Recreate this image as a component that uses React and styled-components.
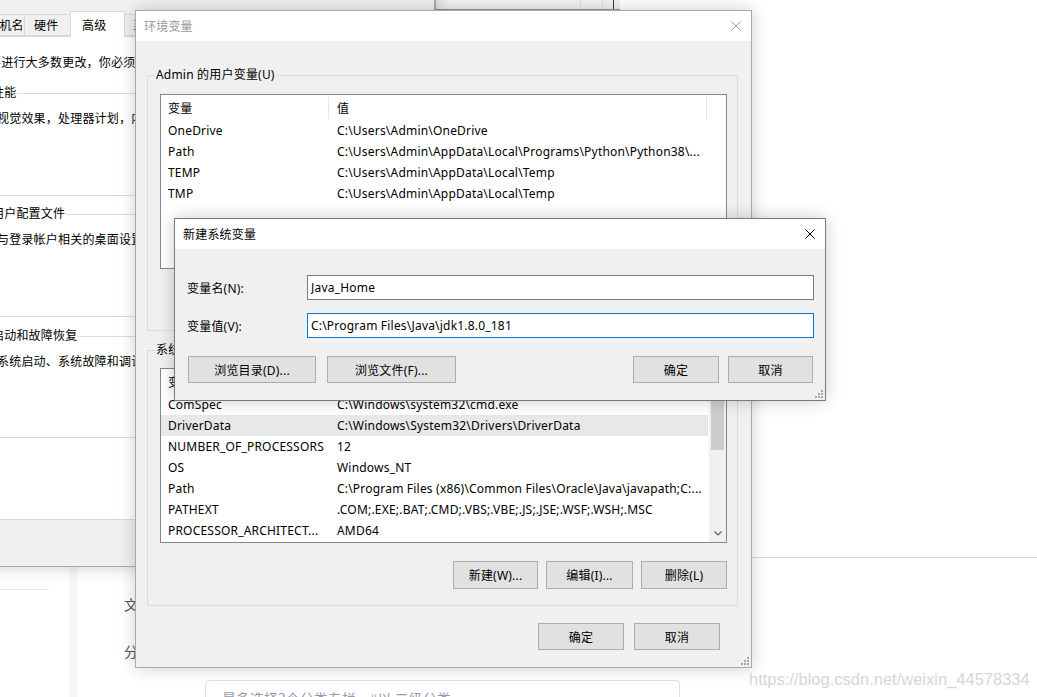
import React from "react"
import styled, { createGlobalStyle } from "styled-components"

const GlobalStyle = createGlobalStyle`
  html, body {
    margin: 0;
    padding: 0;
    background: #fff;
  }
  body {
    font-family: "Noto Sans", "Noto Sans CJK SC", sans-serif;
    font-size: 12px;
    letter-spacing: 0.2px;
    color: #000;
  }
`

const Desktop = styled.div`
  position: relative;
  width: 1037px;
  height: 697px;
  overflow: hidden;
  background: #fff;
`

/* ---------- blog editor page behind the dialogs ---------- */

const BlogPage = styled.div`
  position: absolute;
  inset: 0;
  display: grid;
  grid-template-columns: 69px 8px 1fr;
  grid-template-rows: 567px 1fr;
  font-family: "Noto Sans CJK SC", sans-serif;
  letter-spacing: 0;
`

const HeaderRule = styled.div`
  grid-column: 3;
  grid-row: 1;
  align-self: end;
  justify-self: end;
  width: 285px;
  margin-bottom: 9px;
  border-top: 1px solid #dcdcdc;
`

const NavColumn = styled.div`
  grid-column: 1;
  grid-row: 2;
  padding-top: 22px;
`

const NavRule = styled.div`
  width: 49px;
  border-top: 1px solid #e8e8e8;
`

const Gutter = styled.div`
  grid-column: 2;
  grid-row: 2;
  background: #f5f6f7;
`

const EditorColumn = styled.div`
  grid-column: 3;
  grid-row: 2;
  display: flex;
  flex-direction: column;
  padding: 27px 0 0 47px;
`

const FieldCaption = styled.div`
  height: 47px;
  font-size: 14px;
  line-height: 20px;
  color: #555;
`

const CategoryBox = styled.div`
  margin: -8px 0 0 81px;
  width: 475px;
  height: 40px;
  box-sizing: border-box;
  border: 1px solid #e0e0e6;
  border-radius: 4px;
  padding: 7px 0 0 16px;
  font-size: 14px;
  color: #999aaa;
`

const BackWindowStrip = styled.div`
  position: absolute;
  left: 435px;
  top: -20px;
  width: 185px;
  height: 30px;
  display: flex;
  box-sizing: border-box;
  border-bottom: 1px solid #9a9a9a;
  border-left: 1px solid #bdbdbd;
  background: linear-gradient(#f7f7f7, #f1f1f1);
`

const StripCell = styled.div`
  width: ${(p) => p.$w}px;
  border-right: 1px solid ${(p) => (p.$dark ? "#333" : "#dedede")};
`

/* ---------- generic window chrome ---------- */

const Window = styled.div`
  position: absolute;
  isolation: isolate;
  left: ${(p) => p.$x}px;
  top: ${(p) => p.$y}px;
  width: ${(p) => p.$w}px;
  height: ${(p) => p.$h}px;
  box-sizing: border-box;
  display: flex;
  flex-direction: column;
  padding: ${(p) => p.$pad || 0};
  background: #f0f0f0;
  border: 1px solid ${(p) => (p.$active ? "#7a7a7a" : "#a9a9a9")};
  box-shadow: 0 0 16px rgba(0, 0, 0, 0.2);
`

const TitleBar = styled.div`
  flex: none;
  height: 30px;
  display: flex;
  align-items: center;
  justify-content: space-between;
  padding: 0 10px 0 8px;
  background: #fff;
`

const TitleText = styled.span`
  color: ${(p) => (p.$active ? "#000" : "#9a9a9a")};
`

const CloseIcon = ({ color }) => (
  <svg width="10" height="10" viewBox="0 0 10 10">
    <path d="M0.5 0.5 L9.5 9.5 M9.5 0.5 L0.5 9.5" stroke={color} strokeWidth="1" fill="none" />
  </svg>
)

const GripBox = styled.div`
  position: absolute;
  right: 2px;
  bottom: 2px;
  width: 8px;
  height: 8px;
  display: flex;
`

const ResizeGrip = () => (
  <GripBox>
    <svg width="8" height="8" viewBox="0 0 8 8">
      {[[6, 0], [3, 3], [6, 3], [0, 6], [3, 6], [6, 6]].map(([x, y]) => (
        <rect key={`${x}-${y}`} x={x} y={y} width="2" height="2" fill="#a8a8a8" />
      ))}
    </svg>
  </GripBox>
)

const Button = styled.button`
  flex: none;
  width: ${(p) => p.$w}px;
  height: ${(p) => p.$h || 27}px;
  box-sizing: border-box;
  padding: 0;
  border: 1px solid #adadad;
  background: #e1e1e1;
  font-family: inherit;
  font-size: 12px;
  letter-spacing: inherit;
  color: #000;
`

const GroupBox = styled.div`
  position: relative;
  flex: none;
  display: flex;
  flex-direction: column;
  box-sizing: border-box;
  height: ${(p) => p.$h}px;
  margin: ${(p) => p.$m};
  padding: ${(p) => p.$pad};
  border: 1px solid #dcdcdc;
`

const GroupLabel = styled.span`
  position: absolute;
  top: -9px;
  left: 7px;
  padding: 0 1px;
  line-height: 16px;
  white-space: nowrap;
  background: ${(p) => p.$bg || "#f0f0f0"};
`

/* ---------- system properties window (left, behind) ---------- */

const TabStrip = styled.div`
  flex: none;
  display: flex;
  align-items: flex-end;
  height: 22px;
  position: relative;
  z-index: 1;
`

const Tab = styled.div`
  flex: none;
  width: ${(p) => p.$w}px;
  height: ${(p) => (p.$selected ? 26 : 22)}px;
  box-sizing: border-box;
  padding-left: ${(p) => (p.$selected ? 11 : 9)}px;
  margin: ${(p) => (p.$selected ? "0 -2px -1px" : "0 -1px 0 0")};
  display: flex;
  align-items: center;
  white-space: nowrap;
  border: 1px solid #d9d9d9;
  border-bottom: ${(p) => (p.$selected ? "none" : "1px solid #d9d9d9")};
  background: ${(p) => (p.$selected ? "#fff" : "#f0f0f0")};
  position: relative;
  z-index: ${(p) => (p.$selected ? 2 : 0)};
`

const TabPage = styled.div`
  flex: none;
  height: 484px;
  box-sizing: border-box;
  display: flex;
  flex-direction: column;
  padding: 18px 0 0 23px;
  background: #fff;
  border: 1px solid #d9d9d9;
`

const PageText = styled.div`
  line-height: 16px;
  white-space: nowrap;
`

const GroupText = styled.div`
  line-height: 16px;
  white-space: nowrap;
  padding: 17px 0 0 13px;
`

/* ---------- list view ---------- */

const ListView = styled.div`
  flex: none;
  height: 175px;
  box-sizing: border-box;
  display: flex;
  border: 1px solid #828790;
  background: #fff;
  overflow: hidden;
`

const ListBody = styled.div`
  flex: 1;
  display: flex;
  flex-direction: column;
  min-width: 0;
`

const ListHeader = styled.div`
  flex: none;
  display: flex;
  height: 25px;
`

const HeaderCell = styled.div`
  position: relative;
  flex: none;
  width: ${(p) => p.$w}px;
  box-sizing: border-box;
  padding-left: ${(p) => p.$pl}px;
  display: flex;
  align-items: center;
  &::after {
    content: "";
    position: absolute;
    right: 0;
    top: 2px;
    bottom: 1px;
    width: 1px;
    background: #e5e5e5;
  }
`

const Row = styled.div`
  flex: none;
  display: flex;
  width: 547px;
  height: 21px;
  background: ${(p) => (p.$selected ? "#e8e8e8" : "transparent")};
`

const Cell = styled.div`
  flex: none;
  width: ${(p) => p.$w}px;
  box-sizing: border-box;
  padding-left: ${(p) => p.$pl}px;
  display: flex;
  align-items: center;
  white-space: nowrap;
  overflow: hidden;
`

const ScrollBar = styled.div`
  flex: none;
  width: 17px;
  display: flex;
  flex-direction: column;
  background: #f0f0f0;
`

const ScrollArrow = styled.div`
  flex: none;
  height: 17px;
  display: flex;
  align-items: center;
  justify-content: center;
`

const ScrollTrack = styled.div`
  flex: 1;
  padding: 0 2px;
`

const ScrollThumb = styled.div`
  height: 64px;
  background: #cdcdcd;
`

const Chevron = ({ up }) => (
  <svg width="8" height="5" viewBox="0 0 8 5">
    <path
      d={up ? "M0.5 4.5 L4 1 L7.5 4.5" : "M0.5 0.5 L4 4 L7.5 0.5"}
      stroke="#606060"
      strokeWidth="1.2"
      fill="none"
    />
  </svg>
)

const VarList = ({ rows, scroll, selected }) => (
  <ListView>
    <ListBody>
      <ListHeader>
        <HeaderCell $w={168} $pl={7}>变量</HeaderCell>
        <HeaderCell $w={378} $pl={8}>值</HeaderCell>
      </ListHeader>
      {rows.map(([name, value]) => (
        <Row key={name + value} $selected={name === selected}>
          <Cell $w={168} $pl={7}>{name}</Cell>
          <Cell $w={379} $pl={8}>{value}</Cell>
        </Row>
      ))}
    </ListBody>
    {scroll && (
      <ScrollBar>
        <ScrollArrow>
          <Chevron up />
        </ScrollArrow>
        <ScrollTrack>
          <ScrollThumb />
        </ScrollTrack>
        <ScrollArrow>
          <Chevron />
        </ScrollArrow>
      </ScrollBar>
    )}
  </ListView>
)

const ButtonRow = styled.div`
  flex: none;
  display: flex;
  justify-content: flex-end;
  gap: ${(p) => p.$gap}px;
  margin-top: ${(p) => p.$mt}px;
  padding-right: ${(p) => p.$pr || 0}px;
`

/* ---------- new variable dialog ---------- */

const FormBody = styled.div`
  display: flex;
  flex-direction: column;
  padding: 26px 11px 0 12px;
`

const FormRow = styled.div`
  display: flex;
  align-items: center;
  margin-top: ${(p) => p.$mt || 0}px;
`

const FieldLabel = styled.label`
  flex: none;
  width: 120px;
`

const TextInput = styled.input`
  flex: 1;
  height: 25px;
  box-sizing: border-box;
  margin: 0;
  padding: 0 0 0 3px;
  border: 1px solid ${(p) => (p.$focused ? "#0078d7" : "#7a7a7a")};
  background: #fff;
  font-family: inherit;
  font-size: 12px;
  letter-spacing: inherit;
  color: #000;
  outline: none;
`

const DialogButtons = styled.div`
  display: flex;
  gap: 11px;
  margin-top: 18px;
  padding: 0 1px;
`

const Spacer = styled.div`
  flex: 1;
`

const Watermark = styled.div`
  position: absolute;
  left: 749px;
  top: 670px;
  font-family: "Liberation Sans", Arial, sans-serif;
  font-size: 16.5px;
  letter-spacing: 0;
  color: #d6d6d6;
  white-space: nowrap;
`

const userVars = [
  ["OneDrive", "C:\\Users\\Admin\\OneDrive"],
  ["Path", "C:\\Users\\Admin\\AppData\\Local\\Programs\\Python\\Python38\\..."],
  ["TEMP", "C:\\Users\\Admin\\AppData\\Local\\Temp"],
  ["TMP", "C:\\Users\\Admin\\AppData\\Local\\Temp"],
]

const systemVars = [
  ["ComSpec", "C:\\Windows\\system32\\cmd.exe"],
  ["DriverData", "C:\\Windows\\System32\\Drivers\\DriverData"],
  ["NUMBER_OF_PROCESSORS", "12"],
  ["OS", "Windows_NT"],
  ["Path", "C:\\Program Files (x86)\\Common Files\\Oracle\\Java\\javapath;C:..."],
  ["PATHEXT", ".COM;.EXE;.BAT;.CMD;.VBS;.VBE;.JS;.JSE;.WSF;.WSH;.MSC"],
  ["PROCESSOR_ARCHITECT...", "AMD64"],
]

export default function App() {
  return (
    <Desktop>
      <GlobalStyle />

      <BlogPage>
        <HeaderRule />
        <NavColumn>
          <NavRule />
        </NavColumn>
        <Gutter />
        <EditorColumn>
          <FieldCaption>文章标签</FieldCaption>
          <FieldCaption>分类专栏</FieldCaption>
          <CategoryBox>最多选择3个分类专栏　#以 二级分类</CategoryBox>
        </EditorColumn>
      </BlogPage>

      <BackWindowStrip>
        <StripCell $w={144} />
        <StripCell $w={21} />
        <StripCell $w={10} $dark />
      </BackWindowStrip>

      <Window $x={-40} $y={-20} $w={475} $h={587} $pad="33px 0 0 4px">
        <TabStrip>
          <Tab $w={60}>计算机名</Tab>
          <Tab $w={49}>硬件</Tab>
          <Tab $w={55} $selected>高级</Tab>
          <Tab $w={76}>系统保护</Tab>
          <Tab $w={50}>远程</Tab>
        </TabStrip>
        <TabPage>
          <PageText>要进行大多数更改，你必须作为管理员登录。</PageText>
          <GroupBox $h={103} $m="22px 12px 0 -6px" $pad="0">
            <GroupLabel $bg="#fff">性能</GroupLabel>
            <GroupText>视觉效果，处理器计划，内存使用，以及虚拟内存</GroupText>
          </GroupBox>
          <GroupBox $h={103} $m="18px 12px 0 -6px" $pad="0">
            <GroupLabel $bg="#fff">用户配置文件</GroupLabel>
            <GroupText>与登录帐户相关的桌面设置</GroupText>
          </GroupBox>
          <GroupBox $h={102} $m="19px 12px 0 -6px" $pad="0">
            <GroupLabel $bg="#fff">启动和故障恢复</GroupLabel>
            <GroupText>系统启动、系统故障和调试信息</GroupText>
          </GroupBox>
        </TabPage>
      </Window>

      <Window $x={135} $y={10} $w={617} $h={658}>
        <TitleBar>
          <TitleText>环境变量</TitleText>
          <CloseIcon color="#9a9a9a" />
        </TitleBar>
        <GroupBox $h={256} $m="34px 13px 0 11px" $pad="18px 10px 0 12px">
          <GroupLabel>Admin 的用户变量(U)</GroupLabel>
          <VarList rows={userVars} />
          <ButtonRow $gap={8} $mt={15}>
            <Button $w={85} $h={28}>新建(N)...</Button>
            <Button $w={87} $h={28}>编辑(E)...</Button>
            <Button $w={86} $h={28}>删除(D)</Button>
          </ButtonRow>
        </GroupBox>
        <GroupBox $h={256} $m="19px 13px 0 11px" $pad="17px 10px 0 12px">
          <GroupLabel>系统变量(S)</GroupLabel>
          <VarList rows={systemVars} scroll selected="DriverData" />
          <ButtonRow $gap={8} $mt={18}>
            <Button $w={85} $h={28}>新建(W)...</Button>
            <Button $w={87} $h={28}>编辑(I)...</Button>
            <Button $w={86} $h={28}>删除(L)</Button>
          </ButtonRow>
        </GroupBox>
        <ButtonRow $gap={10} $mt={17} $pr={31}>
          <Button $w={86}>确定</Button>
          <Button $w={86}>取消</Button>
        </ButtonRow>
        <ResizeGrip />
      </Window>

      <Window $x={174} $y={218} $w={652} $h={183} $active>
        <TitleBar>
          <TitleText $active>新建系统变量</TitleText>
          <CloseIcon color="#000" />
        </TitleBar>
        <FormBody>
          <FormRow>
            <FieldLabel>变量名(N):</FieldLabel>
            <TextInput readOnly value="Java_Home" />
          </FormRow>
          <FormRow $mt={13}>
            <FieldLabel>变量值(V):</FieldLabel>
            <TextInput readOnly $focused value="C:\Program Files\Java\jdk1.8.0_181" />
          </FormRow>
          <DialogButtons>
            <Button $w={128}>浏览目录(D)...</Button>
            <Button $w={129}>浏览文件(F)...</Button>
            <Spacer />
            <Button $w={86}>确定</Button>
            <Button $w={85} style={{ marginLeft: -2 }}>取消</Button>
          </DialogButtons>
        </FormBody>
        <ResizeGrip />
      </Window>

      <Watermark>https://blog.csdn.net/weixin_44578334</Watermark>
    </Desktop>
  )
}
